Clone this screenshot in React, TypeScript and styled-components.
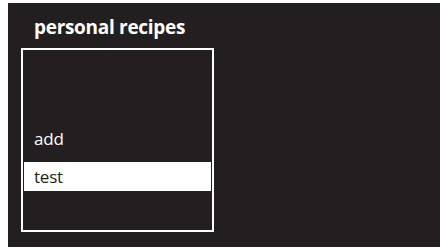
import React, { ReactElement } from 'react';
import styled, { createGlobalStyle } from 'styled-components';

const GlobalStyle = createGlobalStyle`
  html, body {
    margin: 0;
    padding: 0;
    background: #fff;
  }
  body {
    font-family: 'Open Sans', 'Noto Sans', sans-serif;
  }
`;

const Screen = styled.div`
  width: 440px;
  height: 249px;
  padding: 3px 0 2px 8px;
  box-sizing: border-box;
  display: flex;
`;

const Panel = styled.div`
  flex: 1;
  background: #231f20;
  display: flex;
  flex-direction: column;
  padding: 0 0 0 13px;
`;

const Title = styled.h1`
  margin: 0;
  padding: 12px 0 0 13px;
  height: 33px;
  font-family: 'Open Sans', sans-serif;
  font-weight: 700;
  font-size: 19px;
  line-height: 24px;
  color: #fff;
  letter-spacing: -0.3px;
`;

const RecipeList = styled.ul`
  list-style: none;
  margin: 0;
  width: 193px;
  height: 184px;
  box-sizing: border-box;
  border: 2px solid #fff;
  padding: 74px 1px 0 1px;
  display: flex;
  flex-direction: column;
  gap: 9px;
`;

const RecipeItem = styled.li<{ $selected?: boolean }>`
  height: 29px;
  padding-left: 10px;
  display: flex;
  align-items: center;
  font-family: 'Open Sans', sans-serif;
  font-size: 17px;
  letter-spacing: -0.2px;
  background: ${(p) => (p.$selected ? '#fff' : 'transparent')};
  color: ${(p) => (p.$selected ? '#231f20' : '#fff')};
`;

const recipes = [
  { name: 'add', selected: false },
  { name: 'test', selected: true },
];

function App(): ReactElement {
  return (
    <>
      <GlobalStyle />
      <Screen>
        <Panel>
          <Title>personal recipes</Title>
          <RecipeList>
            {recipes.map((r) => (
              <RecipeItem key={r.name} $selected={r.selected}>
                {r.name}
              </RecipeItem>
            ))}
          </RecipeList>
        </Panel>
      </Screen>
    </>
  );
}

export default App;
